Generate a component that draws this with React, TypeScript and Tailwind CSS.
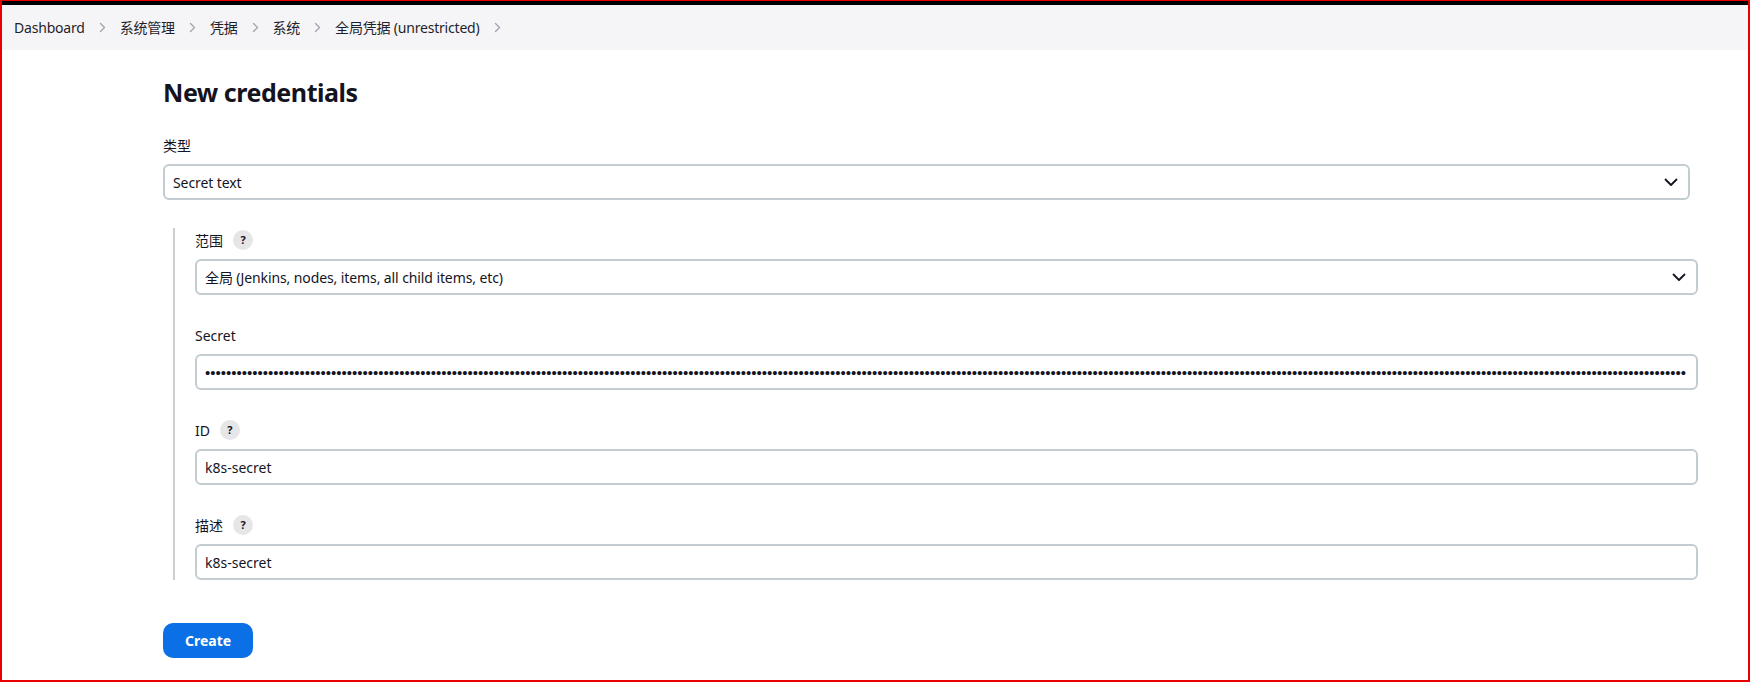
import React from 'react';

const crumbs = ['Dashboard', '系统管理', '凭据', '系统', '全局凭据 (unrestricted)'];

const Chevron: React.FC = () => (
  <svg width="7" height="11" viewBox="0 0 7 11" className="shrink-0">
    <polyline
      points="1.5,1.5 5.5,5.5 1.5,9.5"
      fill="none"
      stroke="#a3a3ad"
      strokeWidth="1.3"
      strokeLinecap="round"
      strokeLinejoin="round"
    />
  </svg>
);

const SelectArrow: React.FC = () => (
  <svg width="14" height="9" viewBox="0 0 14 9" className="shrink-0">
    <polyline
      points="1.5,1.5 7,7 12.5,1.5"
      fill="none"
      stroke="#14141f"
      strokeWidth="1.8"
      strokeLinecap="round"
      strokeLinejoin="round"
    />
  </svg>
);

const Help: React.FC = () => (
  <span className="flex h-[20px] w-[20px] items-center justify-center rounded-full bg-[#e6e6e9] text-[11px] font-bold text-[#14141f]">
    ?
  </span>
);

const Label: React.FC<{ text: string; help?: boolean }> = ({ text, help }) => (
  <div className="mb-[9px] flex h-[20px] items-center gap-[10px] text-[14px] text-[#14141f]">
    <span>{text}</span>
    {help && <Help />}
  </div>
);

const Select: React.FC<{ value: string }> = ({ value }) => (
  <div className="flex h-[36px] items-center justify-between rounded-[6px] border-2 border-[#c3ccd1] bg-white pl-[8px] pr-[10px] text-[14px] tracking-[-0.1px] text-[#14141f]">
    <span>{value}</span>
    <SelectArrow />
  </div>
);

const TextInput: React.FC<{ value: string }> = ({ value }) => (
  <div className="flex h-[36px] items-center rounded-[6px] border-2 border-[#c3ccd1] bg-white px-[8px] text-[14px] text-[#14141f]">
    {value}
  </div>
);

export default function App() {
  return (
    <div
      className="flex h-[682px] w-full flex-col border-x-2 border-b-2 border-t border-[#e80000] bg-white text-[#14141f]"
      style={{ fontFamily: '"Noto Sans", "Noto Sans CJK SC", sans-serif' }}
    >
      <div className="h-[4px] bg-black" />

      {/* breadcrumb */}
      <nav className="flex h-[45px] items-center bg-[#f5f5f7] pl-[12px] text-[14px] tracking-[-0.2px] text-[#1f1f2b]">
        {crumbs.map((c) => (
          <div key={c} className="flex items-center">
            <span>{c}</span>
            <span className="ml-[14px] mr-[14px]">
              <Chevron />
            </span>
          </div>
        ))}
      </nav>

      <main className="pl-[161px] pr-[58px]">
        <h1 className="mt-[26px] text-[25px] font-bold leading-[32px] tracking-[-0.45px] text-[#14141f]">
          New credentials
        </h1>

        <div className="mt-[27px]">
          <Label text="类型" />
          <Select value="Secret text" />
        </div>

        <section className="ml-[10px] mr-[-8px] mt-[28px] border-l-2 border-[#c8ced2] pl-[20px] pt-[2px]">
          <div>
            <Label text="范围" help />
            <Select value="全局 (Jenkins, nodes, items, all child items, etc)" />
          </div>

          <div className="mt-[30px]">
            <Label text="Secret" />
            <div className="flex h-[36px] items-center rounded-[6px] border-2 border-[#c3ccd1] bg-white pl-[8px] pr-[8px]">
              <span className="overflow-hidden whitespace-nowrap font-['Liberation_Sans',sans-serif] text-[15px] leading-none text-[#14141f]">
                {'•'.repeat(282)}
              </span>
            </div>
          </div>

          <div className="mt-[30px]">
            <Label text="ID" help />
            <TextInput value="k8s-secret" />
          </div>

          <div className="mt-[30px]">
            <Label text="描述" help />
            <TextInput value="k8s-secret" />
          </div>
        </section>

        <button className="mt-[43px] h-[35px] w-[90px] rounded-[10px] bg-[#0b70e6] text-[14px] font-bold text-white">
          Create
        </button>
      </main>
    </div>
  );
}
